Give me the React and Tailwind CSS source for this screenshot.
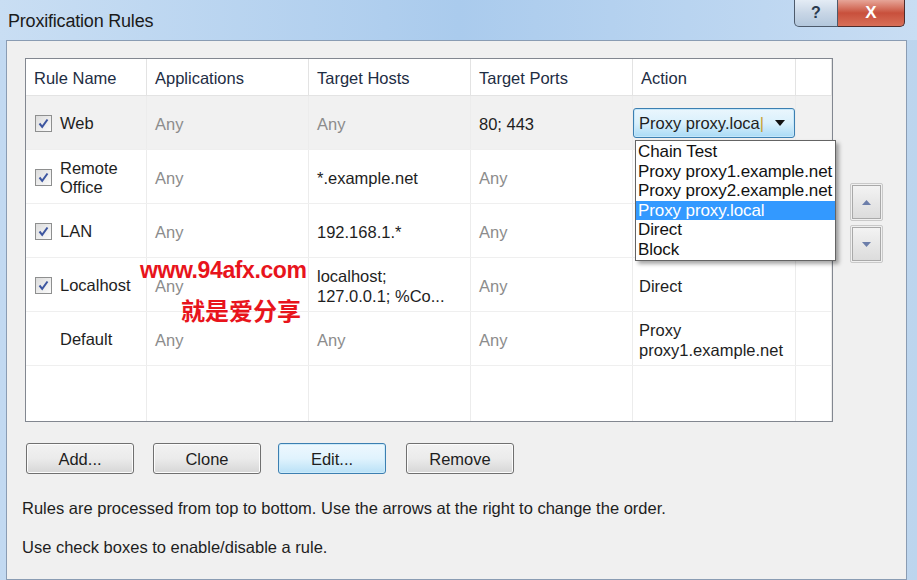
const font = { fontFamily: '"Liberation Sans", Arial, sans-serif' }

function Check() {
  return (
    <span className="w-[17px] h-[17px] border border-[#8e8f8f] bg-gradient-to-br from-[#dcdcdc] to-[#fbfbfb] flex items-center justify-center shrink-0">
      <svg width="13" height="13" viewBox="0 0 13 13">
        <path d="M2.5 6.5 L5.2 9.8 L10.5 2.5" fill="none" stroke="#3d56a0" strokeWidth="2" />
      </svg>
    </span>
  )
}

const rows = [
  { name: ['Web'], check: true, apps: 'Any', hosts: ['Any'], hostsGray: true, ports: '80; 443', portsGray: false, action: null, selected: true },
  { name: ['Remote', 'Office'], check: true, apps: 'Any', hosts: ['*.example.net'], ports: 'Any', portsGray: true, action: [''] },
  { name: ['LAN'], check: true, apps: 'Any', hosts: ['192.168.1.*'], ports: 'Any', portsGray: true, action: [''] },
  { name: ['Localhost'], check: true, apps: 'Any', hosts: ['localhost;', '127.0.0.1; %Co...'], ports: 'Any', portsGray: true, action: ['Direct'] },
  { name: ['Default'], check: false, apps: 'Any', hosts: ['Any'], hostsGray: true, ports: 'Any', portsGray: true, action: ['Proxy', 'proxy1.example.net'] },
]

const cols = 'grid grid-cols-[121px_162px_162px_162px_163px_36px]'
const cell = 'border-r border-[#ececec] flex items-center px-[8px] pt-[2px] leading-[20px]'

function Button({ children, focused }) {
  return (
    <button
      className={
        'w-[108px] h-[31px] rounded-[3px] border text-[16.5px] text-[#1e1e1e] pt-px ' +
        (focused
          ? 'border-[#3c7fb1] bg-gradient-to-b from-[#eef8fe] via-[#e0f3fd] to-[#b9e1f7] shadow-[inset_0_0_0_1px_#cdebfa]'
          : 'border-[#707070] bg-gradient-to-b from-[#f2f2f2] via-[#ebebeb] to-[#d6d6d6] shadow-[inset_0_0_0_1px_#fcfcfc]')
      }
    >
      {children}
    </button>
  )
}

function Arrow({ up }) {
  return (
    <div className="w-[33px] h-[38px] rounded-[2px] border border-[#c9c9c9] p-px">
      <div className="w-full h-full border border-[#a9a9a9] bg-gradient-to-b from-[#f3f3f3] to-[#dcdcdc] flex items-center justify-center">
        <svg width="9" height="5" viewBox="0 0 9 5">
          <path d={up ? 'M0 5 L4.5 0 L9 5 Z' : 'M0 0 L4.5 5 L9 0 Z'} fill="#6c7eaa" />
        </svg>
      </div>
    </div>
  )
}

export default function App() {
  return (
    <div style={font} className="w-[917px] h-[580px] overflow-hidden flex flex-col bg-gradient-to-r from-[#c2d9f1] via-[#d5e6f7] to-[#bcd5ee]">
      {/* Title bar */}
      <div className="h-[40px] flex items-start justify-between shrink-0 bg-gradient-to-r from-[#c9def3] via-[#aacbed] to-[#c8ddf3]">
        <div className="pl-[8px] pt-[8px] text-[18px] text-[#1b1b1b] tracking-[-0.2px]">Proxification Rules</div>
        <div className="flex mr-[12px]">
          <div className="w-[44px] h-[27px] border border-[#4d5a6b] border-t-0 rounded-bl-[5px] bg-gradient-to-b from-[#e4ecf5] via-[#c8d6e6] to-[#b3c7dc] flex items-center justify-center text-[#2b3a4e] font-bold text-[16px]">
            ?
          </div>
          <div className="w-[67px] h-[27px] border border-[#4d2b2b] border-t-0 border-l-0 rounded-br-[5px] bg-gradient-to-b from-[#e6a598] via-[#c8503c] to-[#d86f58] flex items-center justify-center text-white font-bold text-[17px]">
            X
          </div>
        </div>
      </div>

      {/* Client area */}
      <div className="flex-1 ml-[6px] mr-[10px] border border-[#8a9cb3] bg-[#f0f0f0] pl-[18px] pt-[17px]">
        <div className="flex gap-[17px]">
          <div className="relative w-[808px] h-[364px] border border-[#828790] bg-white text-[16.5px] text-[#1e1e1e]">
            {/* Header */}
            <div className={cols + ' h-[37px] border-b border-[#e3e3e3] text-[#1e2d44]'}>
              {['Rule Name', 'Applications', 'Target Hosts', 'Target Ports', 'Action', ''].map((h, i) => (
                <div key={i} className="border-r border-[#e3e3e3] flex items-center px-[8px] pt-[2px]">{h}</div>
              ))}
            </div>
            {rows.map((r, i) => (
              <div key={i} className={cols + ' h-[54px] border-b border-[#efefef] ' + (r.selected ? 'bg-[#f1f1f1]' : '')}>
                <div className={cell + ' gap-[8px] pl-[9px]'}>
                  {r.check ? <Check /> : <span className="w-[17px] shrink-0" />}
                  <div className="leading-[19px]">
                    {r.name.map((n) => <div key={n}>{n}</div>)}
                  </div>
                </div>
                <div className={cell + ' text-[#8c8c8c]'}>{r.apps}</div>
                <div className={cell + (r.hostsGray ? ' text-[#8c8c8c]' : '')}>
                  <div>{r.hosts.map((h) => <div key={h}>{h}</div>)}</div>
                </div>
                <div className={cell + (r.portsGray ? ' text-[#8c8c8c]' : '')}>{r.ports}</div>
                <div className={r.action ? cell + ' pl-[6px]' : 'border-r border-[#ececec] flex items-center'}>
                  {r.action ? (
                    <div>{r.action.map((a, j) => <div key={j}>{a}</div>)}</div>
                  ) : (
                    <div className="w-full h-[30px] rounded-[3px] border border-[#3c7fb1] bg-gradient-to-b from-[#eaf6fd] via-[#d9f0fc] to-[#a9dbf6] flex items-center pl-[5px] pr-[9px] pt-px shadow-[inset_0_0_0_1px_#c5e7fa]">
                      <span className="flex-1 whitespace-nowrap overflow-hidden">Proxy proxy.loca<span className="text-[#c9a030]">|</span></span>
                      <svg width="10" height="6" viewBox="0 0 10 6"><path d="M0 0 L5 6 L10 0 Z" fill="#111" /></svg>
                    </div>
                  )}
                </div>
                <div className="border-r border-[#ececec]" />
              </div>
            ))}
            <div className={cols + ' h-[55px]'}>
              {[0, 1, 2, 3, 4, 5].map((k) => <div key={k} className="border-r border-[#ececec]" />)}
            </div>

            {/* Dropdown list */}
            <div className="absolute left-[609px] top-[81px] w-[201px] border border-[#646464] bg-white shadow-[3px_3px_4px_rgba(0,0,0,0.35)] py-px text-[17px] leading-[19.5px] text-[#111] tracking-[-0.1px]">
              {['Chain Test', 'Proxy proxy1.example.net', 'Proxy proxy2.example.net', 'Proxy proxy.local', 'Direct', 'Block'].map((o) => (
                <div key={o} className={'px-[2px] whitespace-nowrap ' + (o === 'Proxy proxy.local' ? 'bg-[#3399ff] text-white' : '')}>{o}</div>
              ))}
            </div>

            {/* Watermark */}
            <div className="absolute left-[114px] top-[198px] text-[#e8141c] font-bold text-[23px] leading-[26px] tracking-[-0.4px]">www.94afx.com</div>
            <div className="absolute left-[155px] top-[237px] text-[#e8141c] font-bold text-[24px] leading-[28px]" style={{ fontFamily: '"Noto Sans CJK SC", sans-serif' }}>就是爱分享</div>
          </div>

          <div className="flex flex-col gap-[4px] pt-[125px]">
            <Arrow up />
            <Arrow />
          </div>
        </div>

        <div className="flex mt-[21px] pl-px">
          <Button>Add...</Button>
          <div className="w-[19px]" />
          <Button>Clone</Button>
          <div className="w-[17px]" />
          <Button focused>Edit...</Button>
          <div className="w-[20px]" />
          <Button>Remove</Button>
        </div>

        <div className="mt-[22px] text-[16.5px] text-[#1e1e1e] -ml-[3px]">Rules are processed from top to bottom. Use the arrows at the right to change the order.</div>
        <div className="mt-[14px] text-[16.5px] text-[#1e1e1e] -ml-[3px]">Use check boxes to enable/disable a rule.</div>
      </div>
    </div>
  )
}
